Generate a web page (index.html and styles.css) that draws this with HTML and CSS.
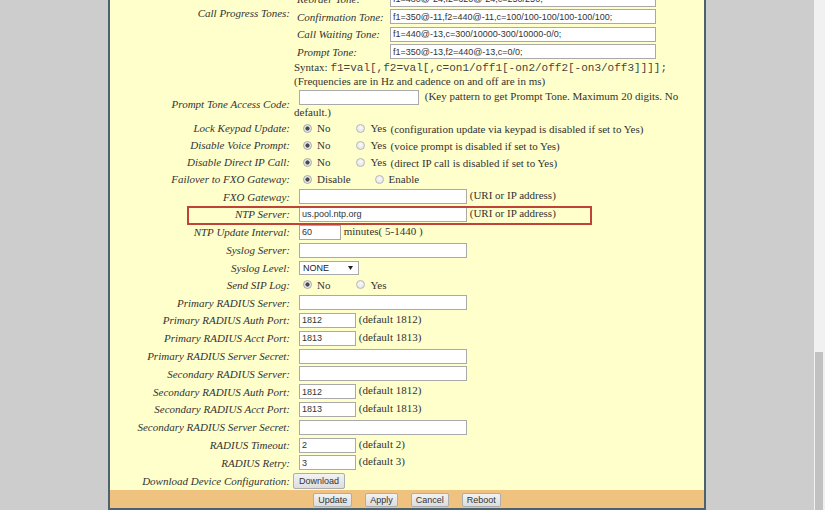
FILE: index.html
```html
<!DOCTYPE html>
<html>
<head>
<meta charset="utf-8">
<link rel="stylesheet" href="styles.css">
</head>
<body>
<div class="screen">
  <div class="viewport">
    <div class="panel">
      <table class="form">
        <tr>
          <th>Call Progress Tones:</th>
          <td class="val">
            <table class="tones">
              <tr><td class="tname">Dial Tone:</td><td><input class="in tone" value="f1=350@-13,f2=440@-13,c=0/0;"></td></tr>
              <tr><td class="tname">Ring Back Tone:</td><td><input class="in tone" value="f1=440@-19,f2=480@-19,c=2000/4000;"></td></tr>
              <tr><td class="tname">Busy Tone:</td><td><input class="in tone" value="f1=480@-24,f2=620@-24,c=500/500;"></td></tr>
              <tr><td class="tname">Reorder Tone:</td><td><input class="in tone" value="f1=480@-24,f2=620@-24,c=250/250;"></td></tr>
              <tr><td class="tname">Confirmation Tone:</td><td><input class="in tone" value="f1=350@-11,f2=440@-11,c=100/100-100/100-100/100;"></td></tr>
              <tr><td class="tname">Call Waiting Tone:</td><td><input class="in tone" value="f1=440@-13,c=300/10000-300/10000-0/0;"></td></tr>
              <tr><td class="tname">Prompt Tone:</td><td><input class="in tone" value="f1=350@-13,f2=440@-13,c=0/0;"></td></tr>
            </table>
            <div class="syntax">Syntax: <code>f1=val[,f2=val[,c=on1/off1[-on2/off2[-on3/off3]]]];</code><br>(Frequencies are in Hz and cadence on and off are in ms)</div>
          </td>
        </tr>
        <tr class="r-multi">
          <th>Prompt Tone Access Code:</th>
          <td class="val wrap"><input class="in w120"> (Key pattern to get Prompt Tone. Maximum 20 digits. No default.)</td>
        </tr>
        <tr class="r-radio">
          <th>Lock Keypad Update:</th>
          <td class="val"><span class="opt"><span class="rd on"></span>No</span><span class="opt second"><span class="rd"></span>Yes</span><span class="note">(configuration update via keypad is disabled if set to Yes)</span></td>
        </tr>
        <tr class="r-radio">
          <th>Disable Voice Prompt:</th>
          <td class="val"><span class="opt"><span class="rd on"></span>No</span><span class="opt second"><span class="rd"></span>Yes</span><span class="note">(voice prompt is disabled if set to Yes)</span></td>
        </tr>
        <tr class="r-radio">
          <th>Disable Direct IP Call:</th>
          <td class="val"><span class="opt"><span class="rd on"></span>No</span><span class="opt second"><span class="rd"></span>Yes</span><span class="note">(direct IP call is disabled if set to Yes)</span></td>
        </tr>
        <tr class="r-radio">
          <th>Failover to FXO Gateway:</th>
          <td class="val"><span class="opt"><span class="rd on"></span>Disable</span><span class="opt second narrow"><span class="rd"></span>Enable</span></td>
        </tr>
        <tr class="r-in">
          <th>FXO Gateway:</th>
          <td class="val"><input class="in w168"> (URI or IP address)</td>
        </tr>
        <tr class="r-in">
          <th class="hl-cell">NTP Server:<span class="hl"></span></th>
          <td class="val"><input class="in w168" value="us.pool.ntp.org"> (URI or IP address)</td>
        </tr>
        <tr class="r-in">
          <th>NTP Update Interval:</th>
          <td class="val"><input class="in w42" value="60"> minutes( 5-1440 )</td>
        </tr>
        <tr class="r-in">
          <th>Syslog Server:</th>
          <td class="val"><input class="in w168"></td>
        </tr>
        <tr class="r-in">
          <th>Syslog Level:</th>
          <td class="val"><span class="selwrap"><select class="sel"><option>NONE</option></select><svg class="arrow" width="5" height="4" viewBox="0 0 5 4"><path d="M0 0h5L2.5 4z" fill="#222"/></svg></span></td>
        </tr>
        <tr class="r-radio">
          <th>Send SIP Log:</th>
          <td class="val"><span class="opt"><span class="rd on"></span>No</span><span class="opt second"><span class="rd"></span>Yes</span></td>
        </tr>
        <tr class="r-in">
          <th>Primary RADIUS Server:</th>
          <td class="val"><input class="in w168"></td>
        </tr>
        <tr class="r-in">
          <th>Primary RADIUS Auth Port:</th>
          <td class="val"><input class="in w57" value="1812"> (default 1812)</td>
        </tr>
        <tr class="r-in">
          <th>Primary RADIUS Acct Port:</th>
          <td class="val"><input class="in w57" value="1813"> (default 1813)</td>
        </tr>
        <tr class="r-in">
          <th>Primary RADIUS Server Secret:</th>
          <td class="val"><input class="in w168"></td>
        </tr>
        <tr class="r-in">
          <th>Secondary RADIUS Server:</th>
          <td class="val"><input class="in w168"></td>
        </tr>
        <tr class="r-in">
          <th>Secondary RADIUS Auth Port:</th>
          <td class="val"><input class="in w57" value="1812"> (default 1812)</td>
        </tr>
        <tr class="r-in">
          <th>Secondary RADIUS Acct Port:</th>
          <td class="val"><input class="in w57" value="1813"> (default 1813)</td>
        </tr>
        <tr class="r-in">
          <th>Secondary RADIUS Server Secret:</th>
          <td class="val"><input class="in w168"></td>
        </tr>
        <tr class="r-in">
          <th>RADIUS Timeout:</th>
          <td class="val"><input class="in w57" value="2"> (default 2)</td>
        </tr>
        <tr class="r-in">
          <th>RADIUS Retry:</th>
          <td class="val"><input class="in w57" value="3"> (default 3)</td>
        </tr>
        <tr class="r-in">
          <th>Download Device Configuration:</th>
          <td class="val"><button class="btn dl">Download</button></td>
        </tr>
      </table>
      <div class="actions">
        <button class="btn">Update</button>
        <button class="btn">Apply</button>
        <button class="btn">Cancel</button>
        <button class="btn">Reboot</button>
      </div>
    </div>
  </div>
  <div class="scrollbar"><div class="thumb"></div></div>
</div>
</body>
</html>
```

FILE: styles.css
```css
* { box-sizing: border-box; }
html, body { margin: 0; padding: 0; height: 100%; overflow: hidden; }
body {
  font-family: "Liberation Serif", "Times New Roman", serif;
  font-size: 11px;
  color: #333;
}
.screen { display: flex; height: 510px; }
.viewport { flex: 1; background: #cdcdcd; overflow: hidden; }
.scrollbar {
  width: 11px;
  background: #f1f1f1;
  display: flex;
  flex-direction: column;
  justify-content: flex-end;
  padding: 0 2px 0 1px;
}
.thumb { height: 158px; background: #c1c1c1; }

.panel {
  width: 598px;
  margin: -62px auto 0;
  background: #ffffcc;
  border-left: 2px solid #4a6272;
  border-right: 2px solid #4a6272;
  border-bottom: 2px solid #4a6272;
}
.form { border-collapse: collapse; width: 100%; }
.form th {
  width: 183px;
  text-align: right;
  font-weight: normal;
  font-style: italic;
  padding: 0 3px 0 0;
  vertical-align: middle;
  white-space: nowrap;
}
.form td.val { padding: 0 0 0 1px; vertical-align: middle; white-space: nowrap; }
.form td.wrap { white-space: normal; line-height: 14px; }
.r-radio th, .r-radio td { height: 17px; }
.r-in th, .r-in td { height: 17.8px; }
.r-multi th, .r-multi td { height: 32.25px; }

.tones { border-collapse: collapse; }
.tones td { height: 17.5px; padding: 0; vertical-align: middle; }
.tones td.tname { width: 96px; padding-left: 3px; font-style: italic; }
.syntax { line-height: 13px; }
.syntax code { font-family: "Liberation Mono", "Courier New", monospace; font-size: 11px; color: #444; }

.in {
  height: 15px;
  border: 1px solid #a9a9a9;
  background: #fff;
  font-family: "Liberation Sans", Arial, sans-serif;
  font-size: 9px;
  color: #333;
  padding: 0 2px;
  margin: 0 0 0 5px;
  vertical-align: middle;
  border-radius: 0;
  outline: none;
}
.in.tone { width: 266px; margin: 0; }
.w120 { width: 120px; margin-right: 3px; }
.w168 { width: 168px; }
.w42 { width: 42px; }
.w57 { width: 57px; }

.opt { display: inline-flex; align-items: center; }
.opt.second { margin-left: 26px; }
.opt.second.narrow { margin-left: 24px; }
.rd {
  width: 9px; height: 9px;
  border-radius: 50%;
  border: 1px solid #b9b9b9;
  background: radial-gradient(circle at 50% 40%, #fbfbfb, #dedede);
  margin: 0 5px 0 9px;
}
.opt.second .rd { margin-left: 0; }
.rd.on {
  border-color: #a8a8a8;
  background: radial-gradient(circle, #4a4a4a 0 1.8px, #e9e9e9 2.4px);
}
.note { margin-left: 4px; }

.selwrap { position: relative; display: inline-block; margin-left: 5px; vertical-align: middle; }
.sel {
  -webkit-appearance: none;
  appearance: none;
  display: block;
  width: 60px; height: 14px;
  border: 1px solid #a9a9a9;
  background: #fff;
  font-family: "Liberation Sans", Arial, sans-serif;
  font-size: 9px;
  color: #222;
  padding: 0 0 0 3px;
  margin: 0;
  border-radius: 0;
}
.arrow { position: absolute; right: 6px; top: 5px; }

.btn {
  font-family: "Liberation Sans", Arial, sans-serif;
  font-size: 9px;
  color: #333;
  background: linear-gradient(#f2f2f2, #dddddd);
  border: 1px solid #adadad;
  border-radius: 2px;
  height: 14px;
  padding: 0 4px;
  margin: 0;
  line-height: 12px;
}
.btn.dl { height: 16px; margin-left: -1px; padding: 0 5px; }

.actions {
  background: #efc27f;
  display: flex;
  justify-content: center;
  gap: 13px;
  padding: 3px 0 1px;
  height: 18px;
}

.hl-cell { position: relative; }
.hl {
  position: absolute;
  left: 77px;
  top: 0;
  width: 405px;
  height: 19px;
  border: 2px solid #c0433a;
}
```
